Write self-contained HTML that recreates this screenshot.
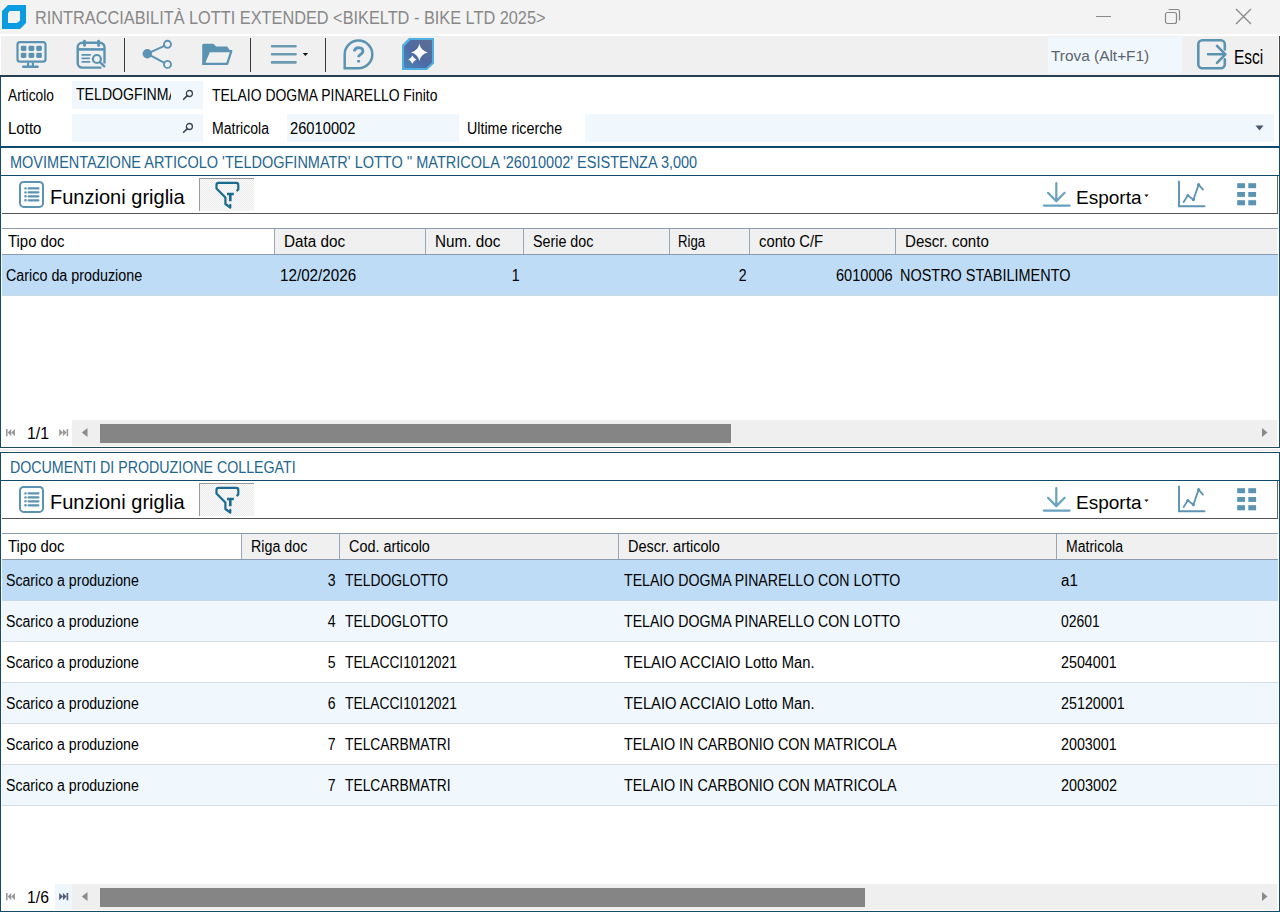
<!DOCTYPE html>
<html><head><meta charset="utf-8">
<style>
*{box-sizing:border-box;margin:0;padding:0}
html,body{width:1280px;height:912px;overflow:hidden;background:#fff}
body{position:relative;font-family:"Liberation Sans",sans-serif;color:#111;font-size:14px}
.a{position:absolute}
.t{position:absolute;white-space:nowrap;line-height:1}
.ic{position:absolute;overflow:visible}
</style></head><body>
<!-- title bar -->
<div class="a" style="left:0;top:0;width:1280px;height:34px;background:#f3f3f3"></div>
<div class="a" style="left:0;top:34px;width:1280px;height:2px;background:#fff"></div>
<svg class="ic" style="left:0;top:0" width="30" height="34" viewBox="0 0 30 34">
<path fill="#0b9be0" fill-rule="evenodd" d="M8 5H26V23L20 29H2V11Z M9.5 11H20V20.5L17 23H8V13.5Z"/>
</svg>
<div class="t" style="left:34.6px;top:9px;font-size:18px;transform:scaleX(0.906);transform-origin:0 0;color:#888">RINTRACCIABILITÀ LOTTI EXTENDED &lt;BIKELTD - BIKE LTD 2025&gt;</div>
<!-- window controls -->
<div class="a" style="left:1096px;top:16px;width:15px;height:1px;background:#8a8a8a"></div>
<svg class="ic" style="left:1160px;top:4px" width="26" height="26" viewBox="0 0 26 26">
<rect x="5.5" y="8.5" width="11" height="11" rx="2" fill="none" stroke="#888" stroke-width="1.2"/>
<path d="M8.5 5.5H17.5A2 2 0 0 1 19.5 7.5V16.5" fill="none" stroke="#888" stroke-width="1.2"/>
</svg>
<svg class="ic" style="left:1230px;top:4px" width="26" height="26" viewBox="0 0 26 26">
<path d="M6 5L21 20M21 5L6 20" stroke="#888" stroke-width="1.3"/>
</svg>
<!-- toolbar -->
<div class="a" style="left:1px;top:36px;width:1279px;height:39px;background:#f0f0f0"></div>
<div class="a" style="left:0;top:75px;width:1280px;height:2px;background:#263e4f"></div>
<div class="a" style="left:1278px;top:36px;width:1px;height:39px;background:#fff"></div><div class="a" style="left:1279px;top:36px;width:1px;height:39px;background:#444"></div>
<svg class="ic" style="left:0;top:0" width="1280" height="77" viewBox="0 0 1280 77">
<g fill="none" stroke="#5b93b2" stroke-linecap="round" stroke-linejoin="round">
<!-- monitor -->
<rect x="17.5" y="42.1" width="28" height="19.6" rx="2.5" stroke-width="2.2"/>
<g fill="#5b93b2" stroke="none">
<rect x="20.8" y="45.7" width="5.6" height="5.2" rx="1.4"/><rect x="28.5" y="45.7" width="5.8" height="5.2" rx="1.4"/><rect x="36.2" y="45.7" width="5.7" height="5.2" rx="1.4"/>
<rect x="20.8" y="52.7" width="5.6" height="5.2" rx="1.4"/><rect x="28.5" y="52.7" width="5.8" height="5.2" rx="1.4"/><rect x="36.2" y="52.7" width="5.7" height="5.2" rx="1.4"/>
<path d="M27 62.5h2.2v3h2.6v-3h2.2v3h3.6a1.2 1.2 0 0 1 0 2.4h-14.4a1.2 1.2 0 0 1 0-2.4h3.8z"/>
</g>
<!-- calendar -->
<path d="M104.5 63.6V47.3a4.5 4.5 0 0 0-4.5-4.5H82.2a4.5 4.5 0 0 0-4.5 4.5V63.1a4.5 4.5 0 0 0 4.5 4.5H101.4" stroke-width="2.4" stroke-linecap="butt"/>
<path d="M78 49.4h26.5" stroke-width="2.6" stroke-linecap="butt"/>
<path d="M84.5 41.2v4.2M98.6 41.2v4.2" stroke-width="2.9"/>
<path d="M81.5 54.8h9.4M81.5 58.3h8.3M81.5 61.9h8.7" stroke-width="1.8" stroke-linecap="butt"/>
<circle cx="96.9" cy="59" r="4" stroke-width="2.2"/>
<path d="M99.9 62.1l4.4 4.3" stroke-width="2.3"/>
<!-- share -->
<circle cx="147.3" cy="53.7" r="4.7" fill="#5b93b2" stroke="none"/>
<circle cx="167.5" cy="44.3" r="3.5" stroke-width="1.9"/>
<circle cx="167.5" cy="64.4" r="3.5" stroke-width="1.9"/>
<path d="M148 53.3L164.4 45.9M148 54.1L164.4 62.8" stroke-width="2"/>
<!-- folder -->
<path d="M202.2 45.3Q202.2 43.8 203.7 43.8H213.3L216.2 46.6H227.2L229.6 49.9H209.2L204.6 64.9H202.2Z" fill="#5b93b2" stroke="none"/>
<path d="M209.2 51.1H231.3L227.2 63.9H203.6Z" stroke-width="2.2"/>
<!-- hamburger -->
<path d="M272 46.2h23.5M272 54.3h23.5M272 62.4h23.5" stroke="#6b9bb1" stroke-width="2.6"/>
<!-- help -->
<path d="M344.7 68.2V54.4A13.8 13.8 0 1 1 358.5 68.2Z" stroke-width="2.5" stroke-linejoin="miter"/>
<path d="M354.3 51.4Q354.8 47.8 358.7 47.7Q362.9 47.9 362.9 51Q362.8 53.3 360.4 54.5Q358.6 55.5 358.6 57.3" stroke-width="2.8" stroke-linecap="butt"/>
</g>
<rect x="357.1" y="60" width="3" height="2.4" rx="0.6" fill="#5b93b2"/>
<path d="M302.7 53h5.4l-2.7 3z" fill="#111"/>
<g fill="#3a3a3a"><rect x="124" y="38" width="1" height="34"/><rect x="250" y="38" width="1" height="34"/><rect x="325" y="38" width="1" height="34"/></g>
<!-- AI -->
<defs><linearGradient id="ai" x1="0" y1="1" x2="1" y2="0"><stop offset="0" stop-color="#4a86bb"/><stop offset="0.45" stop-color="#4d6aa3"/><stop offset="1" stop-color="#5e6e94"/></linearGradient></defs>
<path d="M409 38H434V63.5L427 70H402V45Z" fill="#4fb0e0"/>
<path d="M410.6 40.1H432V62.6L426 67.9H404.1V46.4Z" fill="url(#ai)"/>
<path d="M419.4 43.8Q420.8 50.9 427.9 52.4Q420.8 53.9 419.4 61Q418 53.9 410.9 52.4Q418 50.9 419.4 43.8Z" fill="#fff"/>
<path d="M412.4 55.5Q413.6 58.4 416.5 59.6Q413.6 60.8 412.4 63.7Q411.2 60.8 408.3 59.6Q411.2 58.4 412.4 55.5Z" fill="#fff"/>
<!-- esci -->
<g fill="none" stroke="#5b93b2" stroke-width="2.6" stroke-linecap="round" stroke-linejoin="round">
<path d="M1224.8 49.4V44.3a4 4 0 0 0-4-4H1202.3a4 4 0 0 0-4 4V64.3a4 4 0 0 0 4 4H1220.8a4 4 0 0 0 4-4V59.2"/>
<path d="M1208 54.3H1225M1217 45.8L1225.4 54.3L1217 62.8"/>
</g>
</svg>
<div class="a" style="left:1048px;top:37px;width:134px;height:36px;background:#f0f8fd"></div>
<div class="t" style="left:1051px;top:48px;font-size:15.4px;color:#5c6370">Trova (Alt+F1)</div>
<div class="t" style="left:1233.5px;top:47.2px;font-size:20px;transform:scaleX(0.775);transform-origin:0 0;color:#000">Esci</div>

<!--FORM-->
<div class="a" style="left:0px;top:77px;width:1px;height:371px;background:#174a66;"></div>
<div class="a" style="left:1279px;top:77px;width:1px;height:371px;background:#174a66;"></div>
<div class="a" style="left:72px;top:81px;width:131px;height:28px;background:#f0f8fd;"></div>
<div class="a" style="left:72px;top:114px;width:131px;height:28px;background:#f0f8fd;"></div>
<div class="a" style="left:287px;top:114px;width:172px;height:28px;background:#f0f8fd;"></div>
<div class="a" style="left:585px;top:114px;width:689px;height:28px;background:#f0f8fd;"></div>
<div class="t" style="left:8px;top:88.3px;font-size:15.6px;color:#000;transform:scaleX(0.8823);transform-origin:0 0;">Articolo</div>
<div class="a" style="left:76px;top:86px;width:95px;height:20px;overflow:hidden"><div class="t" style="left:0px;top:1.3px;font-size:15.6px;color:#000;transform:scaleX(0.905);transform-origin:0 0">TELDOGFINMATR</div>
</div>
<div class="t" style="left:212px;top:88.3px;font-size:15.6px;color:#000;transform:scaleX(0.8940);transform-origin:0 0;">TELAIO DOGMA PINARELLO Finito</div>
<div class="t" style="left:8px;top:121.3px;font-size:15.6px;color:#000;transform:scaleX(0.9638);transform-origin:0 0;">Lotto</div>
<div class="t" style="left:212px;top:121.3px;font-size:15.6px;color:#000;transform:scaleX(0.9001);transform-origin:0 0;">Matricola</div>
<div class="t" style="left:290px;top:121.3px;font-size:15.6px;color:#000;transform:scaleX(0.9436);transform-origin:0 0;">26010002</div>
<div class="t" style="left:467px;top:121.3px;font-size:15.6px;color:#000;transform:scaleX(0.9155);transform-origin:0 0;">Ultime ricerche</div>
<svg class="ic" style="left:181px;top:88px" width="14" height="14" viewBox="0 0 14 14"><circle cx="8.4" cy="5.5" r="3" fill="none" stroke="#3a4252" stroke-width="1.3"/><path d="M6.3 7.6L2.6 11.3" stroke="#3a4252" stroke-width="1.6" stroke-linecap="round"/></svg>
<svg class="ic" style="left:181px;top:121px" width="14" height="14" viewBox="0 0 14 14"><circle cx="8.4" cy="5.5" r="3" fill="none" stroke="#3a4252" stroke-width="1.3"/><path d="M6.3 7.6L2.6 11.3" stroke="#3a4252" stroke-width="1.6" stroke-linecap="round"/></svg>
<svg class="ic" style="left:1255px;top:125px" width="9" height="6" viewBox="0 0 9 6"><path d="M0.5 0.5h8l-4 5z" fill="#4a5570"/></svg>
<div class="a" style="left:0px;top:146px;width:1280px;height:2px;background:#0a4a6f;"></div>
<div class="t" style="left:10px;top:154.8px;font-size:15.6px;color:#1e6590;transform:scaleX(0.9297);transform-origin:0 0;">MOVIMENTAZIONE ARTICOLO 'TELDOGFINMATR' LOTTO '' MATRICOLA '26010002' ESISTENZA 3,000</div>
<div class="a" style="left:1px;top:175px;width:1278px;height:1px;background:#0d4b6b;"></div>
<div class="a" style="left:1277px;top:176px;width:1px;height:37px;background:#666;"></div>
<div class="a" style="left:2px;top:213px;width:1276px;height:1px;background:#555;"></div>
<svg class="ic" style="left:0;top:176px" width="1280" height="37" viewBox="0 176 1280 37">
<g fill="none" stroke="#5b93b2">
<rect x="20" y="182" width="23" height="24.9" rx="3.6" stroke-width="2"/>
<path d="M28.6 188.4h9.8M28.6 192.4h9.8M28.6 196.3h9.8M28.6 200.3h9.8" stroke-width="2.2" stroke-linecap="round"/>
<path d="M25.4 188.4h.2M25.4 192.4h.2M25.4 196.3h.2M25.4 200.3h.2" stroke-width="2.4" stroke-linecap="round"/>
<path d="M1056.3 183.2v17.6M1048 192.8l8.3 8.3 8.3-8.3M1043.8 205.6h25.8" stroke="#69a1c1" stroke-width="2.2" stroke-linecap="round" stroke-linejoin="round"/>
<path d="M1179 181.5V206.2H1204.5" stroke-width="1.9" stroke-linecap="round"/>
<path d="M1183.7 202L1187.8 195.4L1193.4 199.8L1198.6 184.6L1203 189.6" stroke-width="1.8" stroke-linecap="round" stroke-linejoin="round"/>
</g>
<g fill="#5b93b2"><circle cx="1187.8" cy="195.4" r="1.5"/><circle cx="1193.4" cy="199.8" r="1.5"/><circle cx="1198.6" cy="184.6" r="1.5"/>
<rect x="1237.2" y="183.2" width="7.8" height="5" /><rect x="1248.3" y="183.2" width="7.8" height="5"/>
<rect x="1237.2" y="192" width="7.8" height="4.9"/><rect x="1248.3" y="192" width="7.8" height="4.9"/>
<rect x="1237.2" y="200.2" width="7.8" height="5.1"/><rect x="1248.3" y="200.2" width="7.8" height="5.1"/></g>
<path d="M1144.3 194.6h4.4l-2.2 2.4z" fill="#111"/>
</svg>
<div class="a" style="left:199px;top:178px;width:55px;height:33px;background:#f3f3f3;border-left:1px solid #9a9a9a;border-top:1px solid #9a9a9a;background-image:repeating-conic-gradient(#ececec 0 25%,#fafafa 0 50%);background-size:2px 2px"></div>
<svg class="ic" style="left:200px;top:178px" width="54" height="33" viewBox="200 178 54 33">
<g fill="none" stroke="#1b6a90" stroke-width="2.2" stroke-linecap="round" stroke-linejoin="round">
<path d="M237.3 190.5L238.3 189.3V184.9Q238.3 182.9 236.3 182.9H218.4Q216.5 182.9 216.5 184.9V188.5L225.4 197.6V204L230.3 207.7V204.9"/>
<path d="M227 194h6.8M230.3 194v7.2" stroke-width="2.6" stroke-linecap="butt"/>
</g></svg>
<div class="t" style="left:50px;top:187.75px;font-size:19.8px;color:#000;transform:scaleX(1.0125);transform-origin:0 0;">Funzioni griglia</div>
<div class="t" style="left:1076px;top:188.43px;font-size:19px;color:#000;">Esporta</div>
<div class="a" style="left:2px;top:228px;width:1276px;height:1px;background:#8a9bb0;"></div>
<div class="a" style="left:2px;top:229px;width:272px;height:25px;background:#fff;"></div>
<div class="a" style="left:274px;top:229px;width:1003px;height:25px;background:#f0f0f0;"></div>
<div class="a" style="left:2px;top:254px;width:1276px;height:1px;background:#8a9bb0;"></div>
<div class="a" style="left:274px;top:229px;width:1px;height:25px;background:#9aa7b8;"></div>
<div class="a" style="left:425px;top:229px;width:1px;height:25px;background:#9aa7b8;"></div>
<div class="a" style="left:523px;top:229px;width:1px;height:25px;background:#9aa7b8;"></div>
<div class="a" style="left:669px;top:229px;width:1px;height:25px;background:#9aa7b8;"></div>
<div class="a" style="left:749px;top:229px;width:1px;height:25px;background:#9aa7b8;"></div>
<div class="a" style="left:895px;top:229px;width:1px;height:25px;background:#9aa7b8;"></div>
<div class="t" style="left:8px;top:233.8px;font-size:15.6px;color:#000;transform:scaleX(0.9546);transform-origin:0 0;">Tipo doc</div>
<div class="t" style="left:284px;top:233.8px;font-size:15.6px;color:#000;transform:scaleX(0.9792);transform-origin:0 0;">Data doc</div>
<div class="t" style="left:435px;top:233.8px;font-size:15.6px;color:#000;transform:scaleX(0.9795);transform-origin:0 0;">Num. doc</div>
<div class="t" style="left:533px;top:233.8px;font-size:15.6px;color:#000;transform:scaleX(0.9152);transform-origin:0 0;">Serie doc</div>
<div class="t" style="left:678px;top:233.8px;font-size:15.6px;color:#000;transform:scaleX(0.8458);transform-origin:0 0;">Riga</div>
<div class="t" style="left:759px;top:233.8px;font-size:15.6px;color:#000;transform:scaleX(0.9488);transform-origin:0 0;">conto C/F</div>
<div class="t" style="left:905px;top:233.8px;font-size:15.6px;color:#000;transform:scaleX(0.9672);transform-origin:0 0;">Descr. conto</div>
<div class="a" style="left:2px;top:255px;width:1276px;height:40px;background:#bedcf6;"></div>
<div class="a" style="left:2px;top:295px;width:1276px;height:1px;background:#c9d8e5;"></div>
<div class="t" style="left:6px;top:267.8px;font-size:15.6px;color:#000;transform:scaleX(0.9188);transform-origin:0 0;">Carico da produzione</div>
<div class="t" style="left:280px;top:267.8px;font-size:15.6px;color:#000;transform:scaleX(0.9752);transform-origin:0 0;">12/02/2026</div>
<div class="t" style="left:900px;top:267.8px;font-size:15.6px;color:#000;transform:scaleX(0.9267);transform-origin:0 0;">NOSTRO STABILIMENTO</div>
<div class="t" style="right:760px;top:267.8px;font-size:15.6px;color:#000;transform:scaleX(0.9038);transform-origin:100% 0;">1</div>
<div class="t" style="right:533px;top:267.8px;font-size:15.6px;color:#000;transform:scaleX(0.9038);transform-origin:100% 0;">2</div>
<div class="t" style="right:387.5px;top:267.8px;font-size:15.6px;color:#000;transform:scaleX(0.9345);transform-origin:100% 0;">6010006</div>
<div class="a" style="left:72px;top:420px;width:1205px;height:26px;background:#efefef;"></div>
<div class="a" style="left:100px;top:424px;width:631px;height:19px;background:#858585;"></div>
<svg class="ic" style="left:0;top:420px" width="1280" height="26" viewBox="0 420 1280 26">
<g fill="#999"><rect x="6" y="429" width="1.6" height="7.2"/><path d="M7.6 432.6L11.3 429V436.2Z M11.3 432.6L15 429V436.2Z"/></g>
<g fill="#999"><rect x="66.6" y="429" width="1.6" height="7.2"/><path d="M66.6 432.6L62.9 429V436.2Z M62.9 432.6L59.2 429V436.2Z"/></g>
<path d="M87.5 428V437L81.8 432.5Z" fill="#8a8a8a"/>
<path d="M1262 428V437L1267.5 432.5Z" fill="#8a8a8a"/>
</svg>
<div class="t" style="left:27px;top:425.8px;font-size:15.6px;color:#000;transform:scaleX(1.0154);transform-origin:0 0;">1/1</div>
<div class="a" style="left:0px;top:447px;width:1280px;height:1px;background:#1d4a62;"></div>
<div class="a" style="left:0px;top:448px;width:1280px;height:4px;background:#fff;"></div>
<div class="a" style="left:0px;top:449px;width:1280px;height:2px;background:#efefef;"></div>
<div class="a" style="left:0px;top:452px;width:1280px;height:1px;background:#1d4a62;"></div>
<div class="a" style="left:0px;top:453px;width:1px;height:459px;background:#174a66;"></div>
<div class="a" style="left:1279px;top:453px;width:1px;height:459px;background:#174a66;"></div>
<div class="t" style="left:10px;top:459.8px;font-size:15.6px;color:#1e6590;transform:scaleX(0.9117);transform-origin:0 0;">DOCUMENTI DI PRODUZIONE COLLEGATI</div>
<div class="a" style="left:1px;top:480px;width:1278px;height:1px;background:#0d4b6b;"></div>
<div class="a" style="left:1277px;top:481px;width:1px;height:37px;background:#666;"></div>
<div class="a" style="left:2px;top:518px;width:1276px;height:1px;background:#555;"></div>
<svg class="ic" style="left:0;top:481px" width="1280" height="37" viewBox="0 176 1280 37">
<g fill="none" stroke="#5b93b2">
<rect x="20" y="182" width="23" height="24.9" rx="3.6" stroke-width="2"/>
<path d="M28.6 188.4h9.8M28.6 192.4h9.8M28.6 196.3h9.8M28.6 200.3h9.8" stroke-width="2.2" stroke-linecap="round"/>
<path d="M25.4 188.4h.2M25.4 192.4h.2M25.4 196.3h.2M25.4 200.3h.2" stroke-width="2.4" stroke-linecap="round"/>
<path d="M1056.3 183.2v17.6M1048 192.8l8.3 8.3 8.3-8.3M1043.8 205.6h25.8" stroke="#69a1c1" stroke-width="2.2" stroke-linecap="round" stroke-linejoin="round"/>
<path d="M1179 181.5V206.2H1204.5" stroke-width="1.9" stroke-linecap="round"/>
<path d="M1183.7 202L1187.8 195.4L1193.4 199.8L1198.6 184.6L1203 189.6" stroke-width="1.8" stroke-linecap="round" stroke-linejoin="round"/>
</g>
<g fill="#5b93b2"><circle cx="1187.8" cy="195.4" r="1.5"/><circle cx="1193.4" cy="199.8" r="1.5"/><circle cx="1198.6" cy="184.6" r="1.5"/>
<rect x="1237.2" y="183.2" width="7.8" height="5" /><rect x="1248.3" y="183.2" width="7.8" height="5"/>
<rect x="1237.2" y="192" width="7.8" height="4.9"/><rect x="1248.3" y="192" width="7.8" height="4.9"/>
<rect x="1237.2" y="200.2" width="7.8" height="5.1"/><rect x="1248.3" y="200.2" width="7.8" height="5.1"/></g>
<path d="M1144.3 194.6h4.4l-2.2 2.4z" fill="#111"/>
</svg>
<div class="a" style="left:199px;top:483px;width:55px;height:33px;background:#f3f3f3;border-left:1px solid #9a9a9a;border-top:1px solid #9a9a9a;background-image:repeating-conic-gradient(#ececec 0 25%,#fafafa 0 50%);background-size:2px 2px"></div>
<svg class="ic" style="left:200px;top:483px" width="54" height="33" viewBox="200 178 54 33">
<g fill="none" stroke="#1b6a90" stroke-width="2.2" stroke-linecap="round" stroke-linejoin="round">
<path d="M237.3 190.5L238.3 189.3V184.9Q238.3 182.9 236.3 182.9H218.4Q216.5 182.9 216.5 184.9V188.5L225.4 197.6V204L230.3 207.7V204.9"/>
<path d="M227 194h6.8M230.3 194v7.2" stroke-width="2.6" stroke-linecap="butt"/>
</g></svg>
<div class="t" style="left:50px;top:492.75px;font-size:19.8px;color:#000;transform:scaleX(1.0125);transform-origin:0 0;">Funzioni griglia</div>
<div class="t" style="left:1076px;top:493.43px;font-size:19px;color:#000;">Esporta</div>
<div class="a" style="left:2px;top:533px;width:1276px;height:1px;background:#8a9bb0;"></div>
<div class="a" style="left:2px;top:534px;width:239px;height:25px;background:#fff;"></div>
<div class="a" style="left:241px;top:534px;width:1036px;height:25px;background:#f0f0f0;"></div>
<div class="a" style="left:2px;top:559px;width:1276px;height:1px;background:#8a9bb0;"></div>
<div class="a" style="left:241px;top:534px;width:1px;height:25px;background:#9aa7b8;"></div>
<div class="a" style="left:339px;top:534px;width:1px;height:25px;background:#9aa7b8;"></div>
<div class="a" style="left:618px;top:534px;width:1px;height:25px;background:#9aa7b8;"></div>
<div class="a" style="left:1056px;top:534px;width:1px;height:25px;background:#9aa7b8;"></div>
<div class="t" style="left:8px;top:538.8px;font-size:15.6px;color:#000;transform:scaleX(0.9546);transform-origin:0 0;">Tipo doc</div>
<div class="t" style="left:251px;top:538.8px;font-size:15.6px;color:#000;transform:scaleX(0.9152);transform-origin:0 0;">Riga doc</div>
<div class="t" style="left:349px;top:538.8px;font-size:15.6px;color:#000;transform:scaleX(0.9239);transform-origin:0 0;">Cod. articolo</div>
<div class="t" style="left:628px;top:538.8px;font-size:15.6px;color:#000;transform:scaleX(0.9297);transform-origin:0 0;">Descr. articolo</div>
<div class="t" style="left:1066px;top:538.8px;font-size:15.6px;color:#000;transform:scaleX(0.9001);transform-origin:0 0;">Matricola</div>
<div class="a" style="left:2px;top:560px;width:1276px;height:40px;background:#bedcf6;"></div>
<div class="a" style="left:2px;top:600px;width:1276px;height:1px;background:#c9d8e5;"></div>
<div class="t" style="left:6px;top:572.8px;font-size:15.6px;color:#000;transform:scaleX(0.9061);transform-origin:0 0;">Scarico a produzione</div>
<div class="t" style="right:944px;top:572.8px;font-size:15.6px;color:#000;transform:scaleX(0.9038);transform-origin:100% 0;">3</div>
<div class="t" style="left:345px;top:572.8px;font-size:15.6px;color:#000;transform:scaleX(0.8886);transform-origin:0 0;">TELDOGLOTTO</div>
<div class="t" style="left:623.5px;top:572.8px;font-size:15.6px;color:#000;transform:scaleX(0.9068);transform-origin:0 0;">TELAIO DOGMA PINARELLO CON LOTTO</div>
<div class="t" style="left:1061px;top:572.8px;font-size:15.6px;color:#000;transform:scaleX(0.9677);transform-origin:0 0;">a1</div>
<div class="a" style="left:2px;top:601px;width:1276px;height:40px;background:#f0f8fe;"></div>
<div class="a" style="left:2px;top:641px;width:1276px;height:1px;background:#d9dde3;"></div>
<div class="t" style="left:6px;top:613.8px;font-size:15.6px;color:#000;transform:scaleX(0.9061);transform-origin:0 0;">Scarico a produzione</div>
<div class="t" style="right:944px;top:613.8px;font-size:15.6px;color:#000;transform:scaleX(0.9038);transform-origin:100% 0;">4</div>
<div class="t" style="left:345px;top:613.8px;font-size:15.6px;color:#000;transform:scaleX(0.8886);transform-origin:0 0;">TELDOGLOTTO</div>
<div class="t" style="left:623.5px;top:613.8px;font-size:15.6px;color:#000;transform:scaleX(0.9068);transform-origin:0 0;">TELAIO DOGMA PINARELLO CON LOTTO</div>
<div class="t" style="left:1061px;top:613.8px;font-size:15.6px;color:#000;transform:scaleX(0.8942);transform-origin:0 0;">02601</div>
<div class="a" style="left:2px;top:642px;width:1276px;height:40px;background:#fff;"></div>
<div class="a" style="left:2px;top:682px;width:1276px;height:1px;background:#d9dde3;"></div>
<div class="t" style="left:6px;top:654.8px;font-size:15.6px;color:#000;transform:scaleX(0.9061);transform-origin:0 0;">Scarico a produzione</div>
<div class="t" style="right:944px;top:654.8px;font-size:15.6px;color:#000;transform:scaleX(0.9038);transform-origin:100% 0;">5</div>
<div class="t" style="left:345px;top:654.8px;font-size:15.6px;color:#000;transform:scaleX(0.8838);transform-origin:0 0;">TELACCI1012021</div>
<div class="t" style="left:623.5px;top:654.8px;font-size:15.6px;color:#000;transform:scaleX(0.9477);transform-origin:0 0;">TELAIO ACCIAIO Lotto Man.</div>
<div class="t" style="left:1061px;top:654.8px;font-size:15.6px;color:#000;transform:scaleX(0.9161);transform-origin:0 0;">2504001</div>
<div class="a" style="left:2px;top:683px;width:1276px;height:40px;background:#f0f8fe;"></div>
<div class="a" style="left:2px;top:723px;width:1276px;height:1px;background:#d9dde3;"></div>
<div class="t" style="left:6px;top:695.8px;font-size:15.6px;color:#000;transform:scaleX(0.9061);transform-origin:0 0;">Scarico a produzione</div>
<div class="t" style="right:944px;top:695.8px;font-size:15.6px;color:#000;transform:scaleX(0.9038);transform-origin:100% 0;">6</div>
<div class="t" style="left:345px;top:695.8px;font-size:15.6px;color:#000;transform:scaleX(0.8838);transform-origin:0 0;">TELACCI1012021</div>
<div class="t" style="left:623.5px;top:695.8px;font-size:15.6px;color:#000;transform:scaleX(0.9477);transform-origin:0 0;">TELAIO ACCIAIO Lotto Man.</div>
<div class="t" style="left:1061px;top:695.8px;font-size:15.6px;color:#000;transform:scaleX(0.9186);transform-origin:0 0;">25120001</div>
<div class="a" style="left:2px;top:724px;width:1276px;height:40px;background:#fff;"></div>
<div class="a" style="left:2px;top:764px;width:1276px;height:1px;background:#d9dde3;"></div>
<div class="t" style="left:6px;top:736.8px;font-size:15.6px;color:#000;transform:scaleX(0.9061);transform-origin:0 0;">Scarico a produzione</div>
<div class="t" style="right:944px;top:736.8px;font-size:15.6px;color:#000;transform:scaleX(0.9038);transform-origin:100% 0;">7</div>
<div class="t" style="left:345px;top:736.8px;font-size:15.6px;color:#000;transform:scaleX(0.8857);transform-origin:0 0;">TELCARBMATRI</div>
<div class="t" style="left:623.5px;top:736.8px;font-size:15.6px;color:#000;transform:scaleX(0.9207);transform-origin:0 0;">TELAIO IN CARBONIO CON MATRICOLA</div>
<div class="t" style="left:1061px;top:736.8px;font-size:15.6px;color:#000;transform:scaleX(0.9161);transform-origin:0 0;">2003001</div>
<div class="a" style="left:2px;top:765px;width:1276px;height:40px;background:#f0f8fe;"></div>
<div class="a" style="left:2px;top:805px;width:1276px;height:1px;background:#d9dde3;"></div>
<div class="t" style="left:6px;top:777.8px;font-size:15.6px;color:#000;transform:scaleX(0.9061);transform-origin:0 0;">Scarico a produzione</div>
<div class="t" style="right:944px;top:777.8px;font-size:15.6px;color:#000;transform:scaleX(0.9038);transform-origin:100% 0;">7</div>
<div class="t" style="left:345px;top:777.8px;font-size:15.6px;color:#000;transform:scaleX(0.8857);transform-origin:0 0;">TELCARBMATRI</div>
<div class="t" style="left:623.5px;top:777.8px;font-size:15.6px;color:#000;transform:scaleX(0.9207);transform-origin:0 0;">TELAIO IN CARBONIO CON MATRICOLA</div>
<div class="t" style="left:1061px;top:777.8px;font-size:15.6px;color:#000;transform:scaleX(0.9244);transform-origin:0 0;">2003002</div>
<div class="a" style="left:72px;top:884px;width:1205px;height:26px;background:#efefef;"></div>
<div class="a" style="left:55px;top:884px;width:17px;height:26px;background:#eef7fd;"></div>
<div class="a" style="left:100px;top:888px;width:765px;height:19px;background:#858585;"></div>
<svg class="ic" style="left:0;top:884px" width="1280" height="26" viewBox="0 420 1280 26">
<g fill="#999"><rect x="6" y="429" width="1.6" height="7.2"/><path d="M7.6 432.6L11.3 429V436.2Z M11.3 432.6L15 429V436.2Z"/></g>
<g fill="#4f5d78"><rect x="66.6" y="429" width="1.6" height="7.2"/><path d="M66.6 432.6L62.9 429V436.2Z M62.9 432.6L59.2 429V436.2Z"/></g>
<path d="M87.5 428V437L81.8 432.5Z" fill="#8a8a8a"/>
<path d="M1262 428V437L1267.5 432.5Z" fill="#8a8a8a"/>
</svg>
<div class="t" style="left:27px;top:889.8px;font-size:15.6px;color:#000;transform:scaleX(1.0108);transform-origin:0 0;">1/6</div>
<div class="a" style="left:0px;top:911px;width:1280px;height:1px;background:#174a66;"></div>
<!--/FORM-->
</body></html>
